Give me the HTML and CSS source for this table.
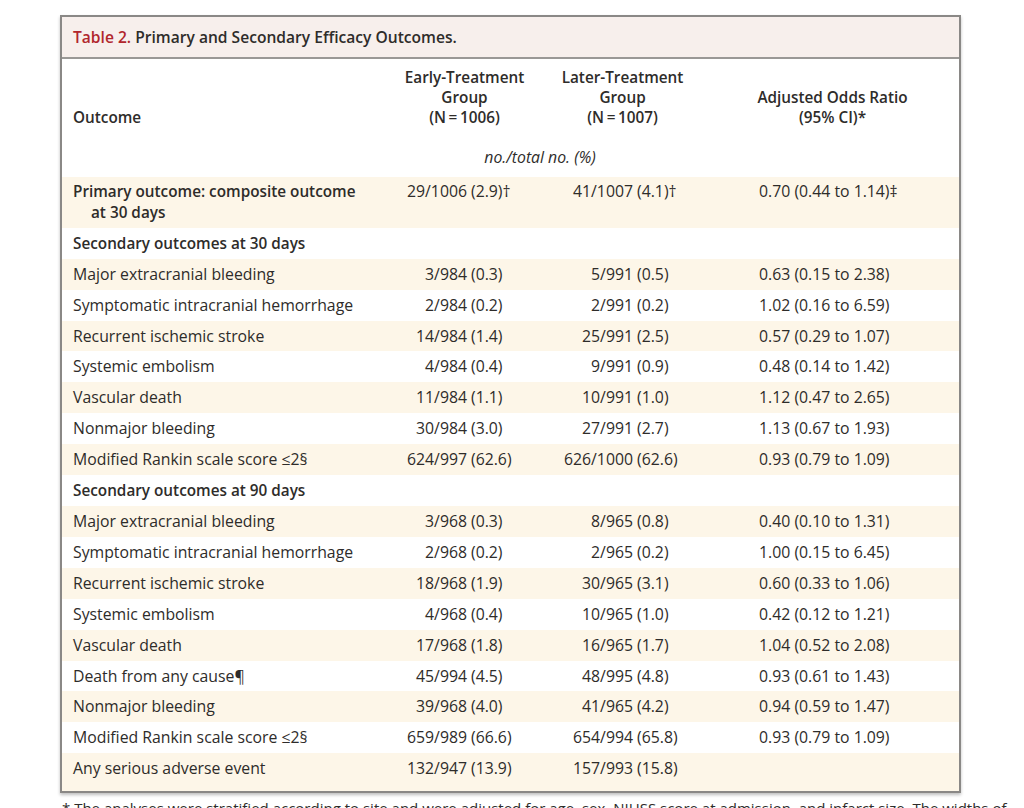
FILE: index.html
```html
<!DOCTYPE html>
<html lang="en">
<head>
    <meta charset="UTF-8" />
    <meta name="viewport" content="width=device-width, initial-scale=1.0" />
    <title>Table 2. Primary and Secondary Efficacy Outcomes</title>
    <link rel="stylesheet" href="styles.css">
</head>
<body>
    <div class="table-box">
        <div class="caption"><span class="label">Table 2.</span> Primary and Secondary Efficacy Outcomes.</div>
        <table>
            <colgroup>
                <col class="c-outcome">
                <col class="c-early-n">
                <col class="c-early-p">
                <col class="c-later-n">
                <col class="c-later-p">
                <col class="c-or">
            </colgroup>
            <thead>
                <tr class="head">
                    <th class="left">Outcome</th>
                    <th colspan="2">Early-Treatment<br />Group<br />(N&thinsp;=&thinsp;1006)</th>
                    <th colspan="2">Later-Treatment<br />Group<br />(N&thinsp;=&thinsp;1007)</th>
                    <th>Adjusted Odds Ratio<br />(95% CI)*</th>
                </tr>
                <tr class="units">
                    <th></th>
                    <th colspan="4"><em>no./total no. (%)</em></th>
                    <th></th>
                </tr>
            </thead>
            <tbody>
                <tr class="primary">
                    <td class="bold hang">Primary outcome: composite outcome<br />at 30 days</td>
                    <td class="n">29/1006</td><td class="p">(2.9)&dagger;</td>
                    <td class="n">41/1007</td><td class="p">(4.1)&dagger;</td>
                    <td class="or">0.70 (0.44 to 1.14)&Dagger;</td>
                </tr>
                <tr class="section">
                    <td class="bold">Secondary outcomes at 30 days</td>
                    <td></td><td></td><td></td><td></td><td></td>
                </tr>
                <tr>
                    <td>Major extracranial bleeding</td>
                    <td class="n">3/984</td><td class="p">(0.3)</td>
                    <td class="n">5/991</td><td class="p">(0.5)</td>
                    <td class="or">0.63 (0.15 to 2.38)</td>
                </tr>
                <tr>
                    <td>Symptomatic intracranial hemorrhage</td>
                    <td class="n">2/984</td><td class="p">(0.2)</td>
                    <td class="n">2/991</td><td class="p">(0.2)</td>
                    <td class="or">1.02 (0.16 to 6.59)</td>
                </tr>
                <tr>
                    <td>Recurrent ischemic stroke</td>
                    <td class="n">14/984</td><td class="p">(1.4)</td>
                    <td class="n">25/991</td><td class="p">(2.5)</td>
                    <td class="or">0.57 (0.29 to 1.07)</td>
                </tr>
                <tr>
                    <td>Systemic embolism</td>
                    <td class="n">4/984</td><td class="p">(0.4)</td>
                    <td class="n">9/991</td><td class="p">(0.9)</td>
                    <td class="or">0.48 (0.14 to 1.42)</td>
                </tr>
                <tr>
                    <td>Vascular death</td>
                    <td class="n">11/984</td><td class="p">(1.1)</td>
                    <td class="n">10/991</td><td class="p">(1.0)</td>
                    <td class="or">1.12 (0.47 to 2.65)</td>
                </tr>
                <tr>
                    <td>Nonmajor bleeding</td>
                    <td class="n">30/984</td><td class="p">(3.0)</td>
                    <td class="n">27/991</td><td class="p">(2.7)</td>
                    <td class="or">1.13 (0.67 to 1.93)</td>
                </tr>
                <tr>
                    <td>Modified Rankin scale score &le;2&sect;</td>
                    <td class="n">624/997</td><td class="p">(62.6)</td>
                    <td class="n">626/1000</td><td class="p">(62.6)</td>
                    <td class="or">0.93 (0.79 to 1.09)</td>
                </tr>
                <tr class="section">
                    <td class="bold">Secondary outcomes at 90 days</td>
                    <td></td><td></td><td></td><td></td><td></td>
                </tr>
                <tr>
                    <td>Major extracranial bleeding</td>
                    <td class="n">3/968</td><td class="p">(0.3)</td>
                    <td class="n">8/965</td><td class="p">(0.8)</td>
                    <td class="or">0.40 (0.10 to 1.31)</td>
                </tr>
                <tr>
                    <td>Symptomatic intracranial hemorrhage</td>
                    <td class="n">2/968</td><td class="p">(0.2)</td>
                    <td class="n">2/965</td><td class="p">(0.2)</td>
                    <td class="or">1.00 (0.15 to 6.45)</td>
                </tr>
                <tr>
                    <td>Recurrent ischemic stroke</td>
                    <td class="n">18/968</td><td class="p">(1.9)</td>
                    <td class="n">30/965</td><td class="p">(3.1)</td>
                    <td class="or">0.60 (0.33 to 1.06)</td>
                </tr>
                <tr>
                    <td>Systemic embolism</td>
                    <td class="n">4/968</td><td class="p">(0.4)</td>
                    <td class="n">10/965</td><td class="p">(1.0)</td>
                    <td class="or">0.42 (0.12 to 1.21)</td>
                </tr>
                <tr>
                    <td>Vascular death</td>
                    <td class="n">17/968</td><td class="p">(1.8)</td>
                    <td class="n">16/965</td><td class="p">(1.7)</td>
                    <td class="or">1.04 (0.52 to 2.08)</td>
                </tr>
                <tr>
                    <td>Death from any cause&para;</td>
                    <td class="n">45/994</td><td class="p">(4.5)</td>
                    <td class="n">48/995</td><td class="p">(4.8)</td>
                    <td class="or">0.93 (0.61 to 1.43)</td>
                </tr>
                <tr>
                    <td>Nonmajor bleeding</td>
                    <td class="n">39/968</td><td class="p">(4.0)</td>
                    <td class="n">41/965</td><td class="p">(4.2)</td>
                    <td class="or">0.94 (0.59 to 1.47)</td>
                </tr>
                <tr>
                    <td>Modified Rankin scale score &le;2&sect;</td>
                    <td class="n">659/989</td><td class="p">(66.6)</td>
                    <td class="n">654/994</td><td class="p">(65.8)</td>
                    <td class="or">0.93 (0.79 to 1.09)</td>
                </tr>
                <tr class="last">
                    <td>Any serious adverse event</td>
                    <td class="n">132/947</td><td class="p">(13.9)</td>
                    <td class="n">157/993</td><td class="p">(15.8)</td>
                    <td class="or"></td>
                </tr>
            </tbody>
        </table>
    </div>
    <p class="footnote">* The analyses were stratified according to site and were adjusted for age, sex, NIHSS score at admission, and infarct size. The widths of</p>
</body>
</html>
```

FILE: styles.css
```css
body {
    font-family: 'Open Sans', 'Noto Sans', sans-serif;
    font-size: 15.8px;
    color: #2e2c2a;
    background: #fff;
    margin: 0;
    padding: 15px 0 0;
}

.table-box {
    width: 897px;
    margin-left: 60px;
    border: 2px solid #8a8886;
    box-shadow: 0 2px 3px rgba(0, 0, 0, 0.25);
}

.caption {
    height: 40px;
    line-height: 40px;
    padding: 0 11px;
    background: #f7efec;
    border-bottom: 2px solid #9a9896;
    font-weight: 600;
    font-size: 15.6px;
}

.caption .label {
    color: #b1262d;
}

table {
    width: 100%;
    border-collapse: collapse;
    table-layout: fixed;
}

.c-outcome { width: 328px; }
.c-early-n { width: 77px; }
.c-early-p { width: 72px; }
.c-later-n { width: 94px; }
.c-later-p { width: 73px; }

th, td {
    padding: 5px 0;
    line-height: 20.9px;
    font-weight: normal;
    white-space: nowrap;
}

.head th {
    font-weight: 600;
    font-size: 15.3px;
    text-align: center;
    vertical-align: bottom;
    line-height: 20px;
    padding: 8px 0 10px;
}

.head th.left {
    text-align: left;
    padding-left: 11px;
}

.units th {
    padding: 10px 16px 10px 0;
    text-align: center;
    line-height: 20px;
}

td:first-child {
    padding-left: 11px;
}

tbody tr:nth-child(odd) {
    background: #fdf6e8;
}

td.bold {
    font-weight: 600;
    font-size: 15.3px;
}

td.hang {
    padding-left: 29px;
    text-indent: -18px;
}

.primary td {
    padding-top: 4px;
    padding-bottom: 5px;
    vertical-align: top;
}

.n {
    text-align: right;
}

.p {
    text-align: left;
    padding-left: 4px;
}

.or {
    padding-left: 53px;
}

.last td {
    padding-bottom: 12px;
}

.footnote {
    margin: 5px 0 0 62px;
    font-size: 15px;
    line-height: 20px;
    white-space: nowrap;
}
```
